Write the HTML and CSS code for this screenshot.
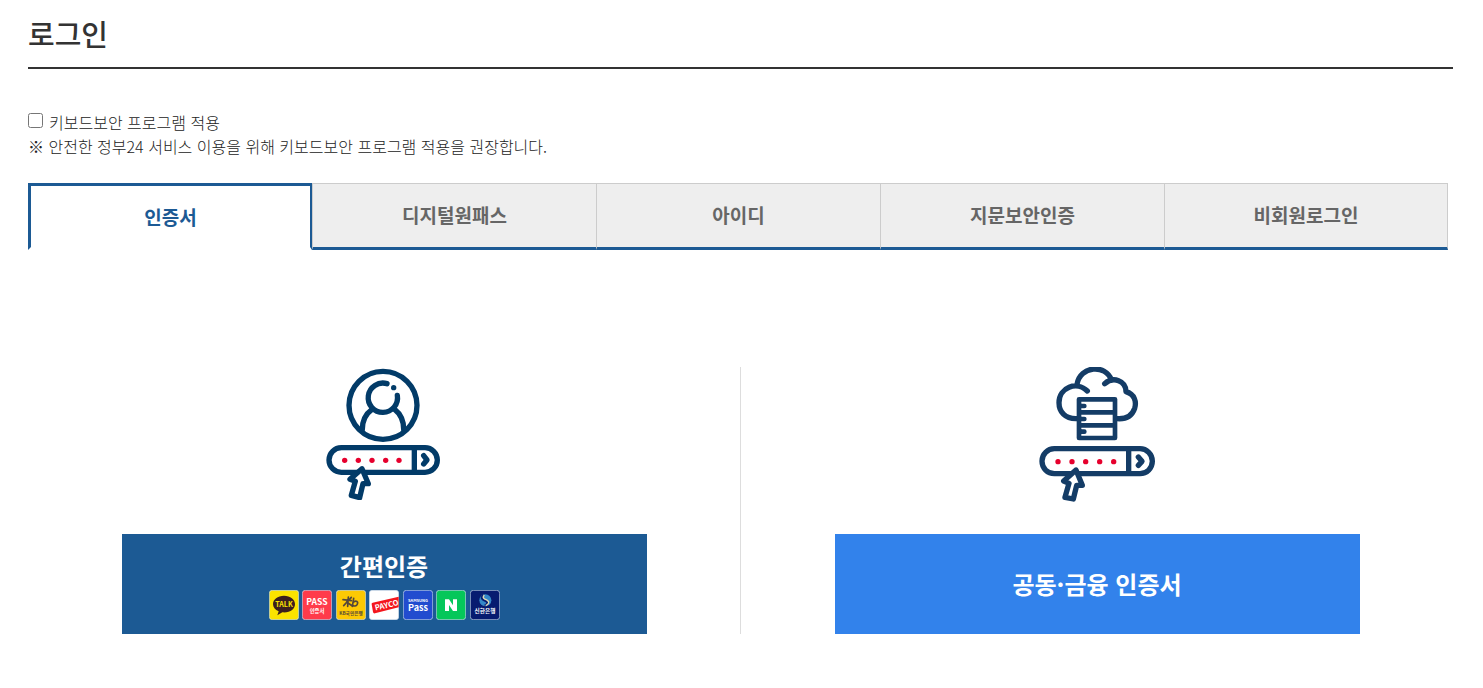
FILE: index.html
```
<!DOCTYPE html>
<html lang="ko">
<head>
    <meta charset="UTF-8">
    <meta name="viewport" content="width=device-width, initial-scale=1">
    <title>로그인</title>
    <link rel="stylesheet" href="styles.css">
</head>
<body>
<div class="container">
    <h1 class="title">로그인</h1>

    <!-- 키보드보안 -->
    <div class="security">
        <div class="check">
            <input type="checkbox" id="keyboard">
            <label for="keyboard">키보드보안 프로그램 적용</label>
        </div>
        <p class="notice">※ 안전한 정부24 서비스 이용을 위해 키보드보안 프로그램 적용을 권장합니다.</p>
    </div>

    <!-- 탭 메뉴 -->
    <ul class="tabs">
        <li class="on"><a href="#">인증서</a></li>
        <li><a href="#">디지털원패스</a></li>
        <li><a href="#">아이디</a></li>
        <li><a href="#">지문보안인증</a></li>
        <li><a href="#">비회원로그인</a></li>
    </ul>

    <!-- 인증 방법 -->
    <div class="methods">
        <div class="method">
            <div class="picture">
                <svg width="116" height="133" viewBox="48 36 348 399" fill="none" stroke="#023b68" stroke-width="16" stroke-linecap="round" stroke-linejoin="round" aria-hidden="true">
                    <circle cx="219" cy="151" r="102"/>
                    <path d="M231 86A44 44 0 1 0 262 121"/>
                    <circle cx="251" cy="98" r="8" fill="#023b68" stroke="none"/>
                    <path d="M186 163Q157 184 157 223M254 163Q281 184 281 223"/>
                    <rect x="57" y="278" width="325" height="74" rx="37"/>
                    <path d="M313 278V352" stroke-linecap="butt"/>
                    <path d="M341 302L351 315L341 327"/>
                    <g fill="#e6002d" stroke="none">
                        <circle cx="104" cy="316" r="8"/>
                        <circle cx="145" cy="316" r="8"/>
                        <circle cx="186" cy="316" r="8"/>
                        <circle cx="227" cy="316" r="8"/>
                        <circle cx="267" cy="316" r="8"/>
                    </g>
                    <path d="M156 341L120 373L136 379L124 421L149 428L159 386L175 386Z" fill="#fff"/>
                </svg>
            </div>
            <button type="button" class="btn btn-simple">
                <span>간편인증</span>
                <span class="brands" aria-hidden="true">
                    <svg viewBox="0 0 90 90">
                        <rect class="frame" x="1" y="1" width="88" height="88" rx="9" fill="#fbe300"/>
                        <path d="M45 17C26 17 12 28 12 42C12 51 18 59 29 64L25 76L40 67C64 69 78 57 78 42C78 28 64 17 45 17Z" fill="#3b1f1e"/>
                        <text x="45" y="50" font-size="21" fill="#fbe300">TALK</text>
                    </svg>
                    <svg viewBox="0 0 90 90">
                        <rect class="frame" x="1" y="1" width="88" height="88" rx="9" fill="#ff3b4b"/>
                        <text x="45" y="46" font-size="26" fill="#fff">PASS</text>
                        <text x="45" y="69" font-size="16" fill="#fff">인증서</text>
                    </svg>
                    <svg viewBox="0 0 90 90">
                        <rect class="frame" x="1" y="1" width="88" height="88" rx="9" fill="#fdc904"/>
                        <path d="M21 29L46 32M37 21L35 49M46 22L23 47M32 36L49 48M53 25L49 49M51 38C60 29 69 35 63 44C59 49 53 49 50 45" fill="none" stroke="#54483a" stroke-width="5" stroke-linecap="round"/>
                        <text x="45" y="74" font-size="14" fill="#54483a">KB국민은행</text>
                    </svg>
                    <svg viewBox="0 0 90 90">
                        <rect class="frame" x="1" y="1" width="88" height="88" rx="9" fill="#fff"/>
                        <path d="M8 43Q7 39 11 38L89 20V52L18 70Q13 71 12 66Z" fill="#f4161d"/>
                        <text x="53" y="54" font-size="23" fill="#fff" transform="rotate(-13 51 46)">PAYCO</text>
                    </svg>
                    <svg viewBox="0 0 90 90">
                        <rect class="frame" x="1" y="1" width="88" height="88" rx="9" fill="#224ccf"/>
                        <text x="45" y="35" font-size="12" fill="#fff">SAMSUNG</text>
                        <text x="45" y="62" font-size="27" fill="#fff">Pass</text>
                    </svg>
                    <svg viewBox="0 0 90 90">
                        <rect class="frame" x="1" y="1" width="88" height="88" rx="9" fill="#05c75a"/>
                        <path d="M27 28H39L51 46V28H63V63H51L39 45V63H27Z" fill="#fff"/>
                    </svg>
                    <svg viewBox="0 0 90 90">
                        <rect class="frame" x="1" y="1" width="88" height="88" rx="9" fill="#071b70"/>
                        <circle cx="46" cy="31" r="18" fill="#3488c9"/>
                        <path d="M39 16C31 24 37 29 47 33C55 37 53 43 44 47" fill="none" stroke="#071b70" stroke-width="6"/>
                        <path d="M43 15C35 24 44 27 52 31C60 36 56 42 47 47" fill="none" stroke="#e4d9b2" stroke-width="4"/>
                        <text x="45" y="70" font-size="17" fill="#fff">신한은행</text>
                    </svg>
                </span>
            </button>
        </div>
        <div class="method">
            <div class="picture">
                <svg width="116" height="135" viewBox="57 36 348 405" fill="none" stroke="#143c66" stroke-width="16" stroke-linecap="round" stroke-linejoin="round" aria-hidden="true">
                    <path d="M170 191C135 192 117 170 117 143C117 97 170 77 202 108M171 88C180 32 257 26 275 76M254 86C280 63 318 77 318 110C344 118 350 140 344 160C336 183 316 193 291 191"/>
                    <path d="M177 133H285V249H177ZM177 172H285M177 211H285M184 153H193M184 192H193M184 230H193" stroke-width="14"/>
                    <rect x="66" y="281" width="331" height="75" rx="37"/>
                    <path d="M326 281V356" stroke-linecap="butt"/>
                    <path d="M355 306L366 319L355 331"/>
                    <g fill="#e6002d" stroke="none">
                        <circle cx="114" cy="320" r="8"/>
                        <circle cx="156" cy="320" r="8"/>
                        <circle cx="197" cy="320" r="8"/>
                        <circle cx="239" cy="320" r="8"/>
                        <circle cx="281" cy="320" r="8"/>
                    </g>
                    <path d="M168 345L131 378L147 385L135 427L160 432L170 391L187 391Z" fill="#fff"/>
                </svg>
            </div>
            <button type="button" class="btn btn-joint">공동·금융 인증서</button>
        </div>
    </div>
</div>
</body>
</html>
```
FILE: styles.css
```
*{
    box-sizing: border-box;
}
body{
    margin: 0;
    color: #222;
    background-color: #fff;
    font-family: "Noto Sans CJK KR", sans-serif;
    font-size: 16px;
    font-weight: 300;
}
.container{
    padding: 13px 30px 54px 28px;
}
.title{
    margin: 0;
    padding-bottom: 14px;
    border-bottom: 2px solid #333;
    color: #333;
    font-size: 29px;
    font-weight: 500;
    line-height: 40px;
}
/* 키보드보안 */
.security{
    margin-top: 41px;
    line-height: 24px;
}
.check{
    display: flex;
    align-items: center;
    gap: 6px;
}
.check input{
    width: 15px;
    height: 15px;
    margin: 0 0 3px;
}
.notice{
    margin: 0;
}
/* 탭 메뉴 */
.tabs{
    display: flex;
    margin: 25px 5px 0 0;
    padding: 0;
    list-style-type: none;
}
.tabs li{
    flex: 1;
}
.tabs a{
    display: block;
    height: 67px;
    border: 1px solid #ccc;
    border-right-width: 0;
    border-bottom: 3px solid #1c5a94;
    background-color: #eee;
    color: #666;
    font-size: 19px;
    font-weight: 700;
    line-height: 61px;
    text-align: center;
    text-decoration: none;
}
.tabs li:last-child a{
    border-right-width: 1px;
}
.tabs .on a{
    border: 3px solid #1c5a94;
    border-right-width: 2px;
    border-bottom-color: #fff;
    background-color: #fff;
    color: #1c5a94;
}
/* 인증 방법 */
.methods{
    display: flex;
    margin-top: 117px;
}
.method{
    flex: 1;
    text-align: center;
}
.method:first-child{
    border-right: 1px solid #ddd;
}
.picture{
    height: 167px;
}
.picture svg{
    display: inline-block;
    vertical-align: top;
}
.btn{
    display: inline-flex;
    flex-direction: column;
    align-items: center;
    justify-content: center;
    gap: 6px;
    width: 74%;
    max-width: 525px;
    height: 100px;
    padding: 0;
    border: 0;
    color: #fff;
    font-family: inherit;
    font-size: 24px;
    font-weight: 700;
    line-height: 36px;
    vertical-align: top;
    cursor: pointer;
}
.btn-simple{
    background-color: #1c5a94;
}
.btn-joint{
    background-color: #3282eb;
}
.brands{
    display: flex;
    justify-content: space-between;
    width: 231px;
}
.brands svg{
    width: 30px;
    height: 30px;
}
.brands .frame{
    stroke: #cfdcec;
    stroke-width: 2;
}
.brands text{
    font-weight: 700;
    text-anchor: middle;
}
```
